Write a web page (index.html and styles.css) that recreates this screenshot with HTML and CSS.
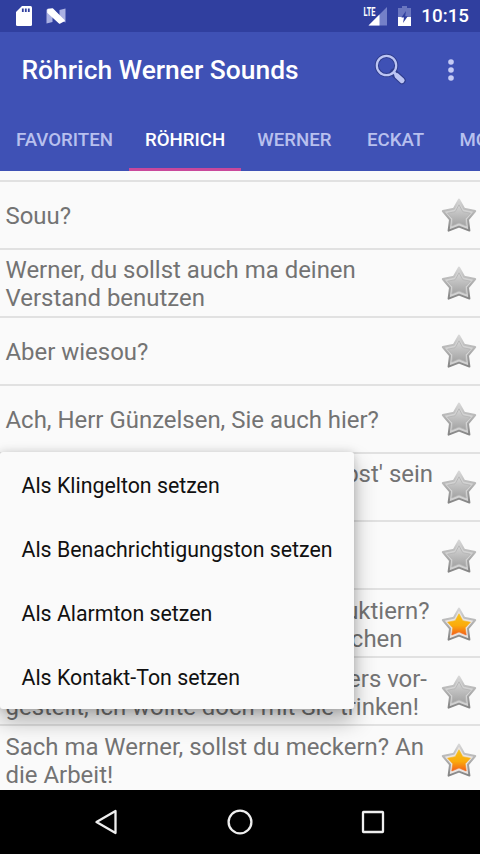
FILE: index.html
```
<!DOCTYPE html>
<html lang="de">
<head>
  <meta charset="UTF-8">
  <meta name="viewport" content="width=device-width, initial-scale=1.0">
  <link rel="stylesheet" href="styles.css">
  <title>Röhrich Werner Sounds</title>
</head>
<body>
  <svg class="defs" width="0" height="0">
    <defs>
      <linearGradient id="grey" x1="0" y1="0" x2="0" y2="1">
        <stop offset="0" stop-color="#d6d6d6"/>
        <stop offset="1" stop-color="#a2a2a2"/>
      </linearGradient>
      <linearGradient id="edge" x1="0" y1="0" x2="0" y2="1">
        <stop offset="0" stop-color="#d8d8d8"/>
        <stop offset="1" stop-color="#858585"/>
      </linearGradient>
      <linearGradient id="gold" x1="0" y1="0" x2="0" y2="1">
        <stop offset="0" stop-color="#f6c21c"/>
        <stop offset="0.55" stop-color="#fbab0c"/>
        <stop offset="1" stop-color="#f2601c"/>
      </linearGradient>
      <path id="star-shape" d="M18 2.5 L23.2 11.8 L34.2 14 L27 22.6 L28.4 33.6 L18 29.6 L7.6 33.6 L9 22.6 L1.8 14 L12.8 11.8 Z"/>
      <path id="star-core" d="M18 7.8 L21.8 14.7 L29.4 16.2 L24.2 21.8 L25.2 29 L18 26 L10.8 29 L11.8 21.8 L6.6 16.2 L14.2 14.7 Z"/>
      <symbol id="star-off" viewBox="0 0 36 36">
        <use href="#star-shape" fill="#d2d2d2" stroke="url(#edge)" stroke-width="2" stroke-linejoin="round"/>
        <use href="#star-core" fill="url(#grey)" stroke="#b2b2b2" stroke-width="0.8" stroke-linejoin="round"/>
      </symbol>
      <symbol id="star-on" viewBox="0 0 36 36">
        <use href="#star-shape" fill="#e9e3e0" stroke="url(#edge)" stroke-width="2" stroke-linejoin="round"/>
        <use href="#star-core" fill="url(#gold)" stroke="url(#gold)" stroke-width="0.6" stroke-linejoin="round"/>
      </symbol>
    </defs>
  </svg>

  <div class="status-bar">
    <svg class="sd-icon" viewBox="0 0 16 20">
      <path d="M6 0 H14.5 Q16 0 16 1.5 V18.5 Q16 20 14.5 20 H1.5 Q0 20 0 18.5 V6 Z" fill="#fff"/>
      <path d="M6.8 2.5 V6 M9.8 2.5 V6 M12.8 2.5 V6" stroke="#303f9f" stroke-width="1.8"/>
    </svg>
    <svg class="n-icon" viewBox="0 0 20 16">
      <path d="M0.5 1.5 L6.5 4 V14 L0.5 15.5 Z M13.5 2 L19.5 0.5 V14.5 L13.5 12 Z" fill="#a9b0e2"/>
      <path d="M2 1.5 L6.5 1 L18 12.5 L13.5 15 L2 4.5 Z" fill="#fff" stroke="#fff" stroke-width="1.6" stroke-linejoin="round"/>
    </svg>
    <svg class="signal-icon" viewBox="0 0 25 20">
      <path d="M24 1 V19.5 H5.5 Z" fill="#7480c8"/>
      <path d="M16.5 8.5 V19.5 H5.5 Z" fill="#fff"/>
      <text x="0.5" y="9.5" textLength="12" lengthAdjust="spacingAndGlyphs">LTE</text>
    </svg>
    <svg class="battery-icon" viewBox="0 0 13 20">
      <path d="M4 0 H9 V2 H13 V11 H0 V2 H4 Z" fill="#6a76c0"/>
      <path d="M0 11 H13 V20 H0 Z" fill="#fff"/>
      <path d="M8 5 L3.4 11.6 H6 L5 17 L9.8 10.2 H7.2 Z" fill="#303f9f"/>
    </svg>
    <span class="clock">10:15</span>
  </div>

  <header>
    <div class="toolbar">
      <h1>Röhrich Werner Sounds</h1>
      <svg class="search-icon" viewBox="0 0 34 34">
        <path d="M19.5 19.5 L28 27.5" stroke="#2f3d8c" stroke-width="7.4" stroke-linecap="round"/>
        <circle cx="12.5" cy="12.5" r="9.7" fill="none" stroke="#2f3d8c" stroke-width="4.2"/>
        <path d="M20 19.5 L22 21.5" stroke="#bcc5f4" stroke-width="3"/>
        <path d="M23 22.8 L28 27.5" stroke="#bcc5f4" stroke-width="5.2" stroke-linecap="round"/>
        <circle cx="12.5" cy="12.5" r="9.7" fill="none" stroke="#bcc5f4" stroke-width="2.2"/>
      </svg>
      <svg class="more-icon" viewBox="0 0 6 22">
        <circle cx="3" cy="3" r="2.8"/>
        <circle cx="3" cy="11" r="2.8"/>
        <circle cx="3" cy="19" r="2.8"/>
      </svg>
    </div>
    <nav class="tabs">
      <span class="tab">FAVORITEN</span>
      <span class="tab active">RÖHRICH</span>
      <span class="tab">WERNER</span>
      <span class="tab">ECKAT</span>
      <span class="tab last">MOIN</span>
    </nav>
  </header>

  <main>
    <ul class="sound-list">
      <li><p>Souu?</p><svg class="star"><use href="#star-off"/></svg></li>
      <li><p>Werner, du sollst auch ma deinen<br>Verstand benutzen</p><svg class="star"><use href="#star-off"/></svg></li>
      <li><p>Aber wiesou?</p><svg class="star"><use href="#star-off"/></svg></li>
      <li><p>Ach, Herr Günzelsen, Sie auch hier?</p><svg class="star"><use href="#star-off"/></svg></li>
      <li><p><span class="tail tail-sein">bst' sein</span>&nbsp;</p><svg class="star"><use href="#star-off"/></svg></li>
      <li><p></p><svg class="star"><use href="#star-off"/></svg></li>
      <li><p><span class="tail tail-uktiern">uktiern?</span><span class="tail tail-chen">chen</span></p><svg class="star"><use href="#star-on"/></svg></li>
      <li><p><span class="tail tail-vor">ers vor-</span>gestellt, ich wollte doch mit Sie trinken!</p><svg class="star"><use href="#star-off"/></svg></li>
      <li><p>Sach ma Werner, sollst du meckern? An<br>die Arbeit!</p><svg class="star"><use href="#star-on"/></svg></li>
    </ul>
    <div class="context-menu">
      <div class="menu-item">Als Klingelton setzen</div>
      <div class="menu-item">Als Benachrichtigungston setzen</div>
      <div class="menu-item">Als Alarmton setzen</div>
      <div class="menu-item">Als Kontakt-Ton setzen</div>
    </div>
  </main>

  <footer>
    <svg viewBox="0 0 28 28"><path d="M22.5 3 V25 L3.5 14 Z"/></svg>
    <svg viewBox="0 0 28 28"><circle cx="14" cy="14" r="11.4"/></svg>
    <svg viewBox="0 0 28 28"><rect x="4" y="4" width="20" height="20" rx="0.5"/></svg>
  </footer>
</body>
</html>
```
FILE: styles.css
```
* {
  box-sizing: border-box;
}

body {
  font-family: Roboto, sans-serif;
  margin: 0;
  width: 480px;
  height: 854px;
  display: flex;
  flex-direction: column;
  overflow: hidden;
  background-color: #fafafa;
}

svg {
  display: block;
  flex: none;
}

.defs {
  position: absolute;
}

.status-bar {
  flex: none;
  display: flex;
  align-items: center;
  height: 32px;
  padding: 0 11px 0 16px;
  background-color: #303f9f;
  color: #fff;
}

.sd-icon {
  width: 16px;
  height: 20px;
}

.n-icon {
  width: 20px;
  height: 16px;
  margin-left: 14px;
}

.signal-icon {
  width: 25px;
  height: 20px;
  margin-left: auto;
}

.signal-icon text {
  font-size: 12.5px;
  font-weight: 700;
  fill: #fff;
}

.battery-icon {
  width: 13px;
  height: 20px;
  margin: 0 10px 0 10px;
}

.clock {
  font-size: 18.8px;
  font-weight: 500;
  line-height: 34px;
}

header {
  flex: none;
  height: 139px;
  background-color: #3f51b5;
}

.toolbar {
  display: flex;
  align-items: center;
  height: 75px;
  padding: 0 26.5px 0 21.5px;
}

h1 {
  margin: 0;
  font-size: 26.4px;
  font-weight: 500;
  line-height: 32px;
  color: #fff;
  white-space: nowrap;
}

.search-icon {
  width: 34px;
  height: 34px;
  margin: 0 40px 0 auto;
}

.more-icon {
  width: 6px;
  height: 22px;
  fill: #c5cbf5;
}

.tabs {
  display: flex;
  height: 64px;
  overflow: hidden;
}

.tab {
  flex: none;
  min-width: 96px;
  height: 64px;
  padding: 0 16px;
  font-size: 18.67px;
  font-weight: 500;
  line-height: 66px;
  text-align: center;
  color: #b8c0ee;
}

.tab.active {
  color: #fff;
  border-bottom: 3px solid #c9489b;
}

.tab.last {
  text-align: left;
}

main {
  position: relative;
  flex: none;
  height: 619px;
  overflow: hidden;
}

.sound-list {
  list-style: none;
  margin: 8.5px 0 0;
  padding: 0;
}

.sound-list li {
  display: flex;
  align-items: center;
  justify-content: space-between;
  height: 68.1px;
  padding: 1px 3px 0 5.5px;
  border-top: 2px solid #e1e1e1;
}

.sound-list p {
  margin: 0;
  padding-top: 2px;
  font-size: 23.95px;
  line-height: 28px;
  color: #737373;
  white-space: nowrap;
}

.star {
  width: 36px;
  height: 36px;
}

.tail {
  display: block;
  text-align: right;
}

.tail-sein {
  width: 427.5px;
}

.tail-uktiern {
  width: 424px;
}

.tail-chen {
  width: 397px;
}

.tail-vor {
  width: 421.5px;
}

.context-menu {
  position: absolute;
  left: 0;
  top: 281px;
  width: 354px;
  height: 257px;
  background-color: #fafafa;
  border-radius: 3px;
  box-shadow: 0 12px 22px rgba(0, 0, 0, 0.3), 0 0 8px rgba(0, 0, 0, 0.15);
}

.menu-item {
  height: 64px;
  padding-left: 21.5px;
  font-size: 21.33px;
  line-height: 67px;
  color: #111;
  white-space: nowrap;
}

footer {
  flex: none;
  display: flex;
  align-items: center;
  justify-content: center;
  gap: 105px;
  height: 64px;
  background-color: #000;
}

footer svg {
  width: 28px;
  height: 28px;
  fill: none;
  stroke: #eee;
  stroke-width: 2.3;
  stroke-linejoin: round;
}
```
